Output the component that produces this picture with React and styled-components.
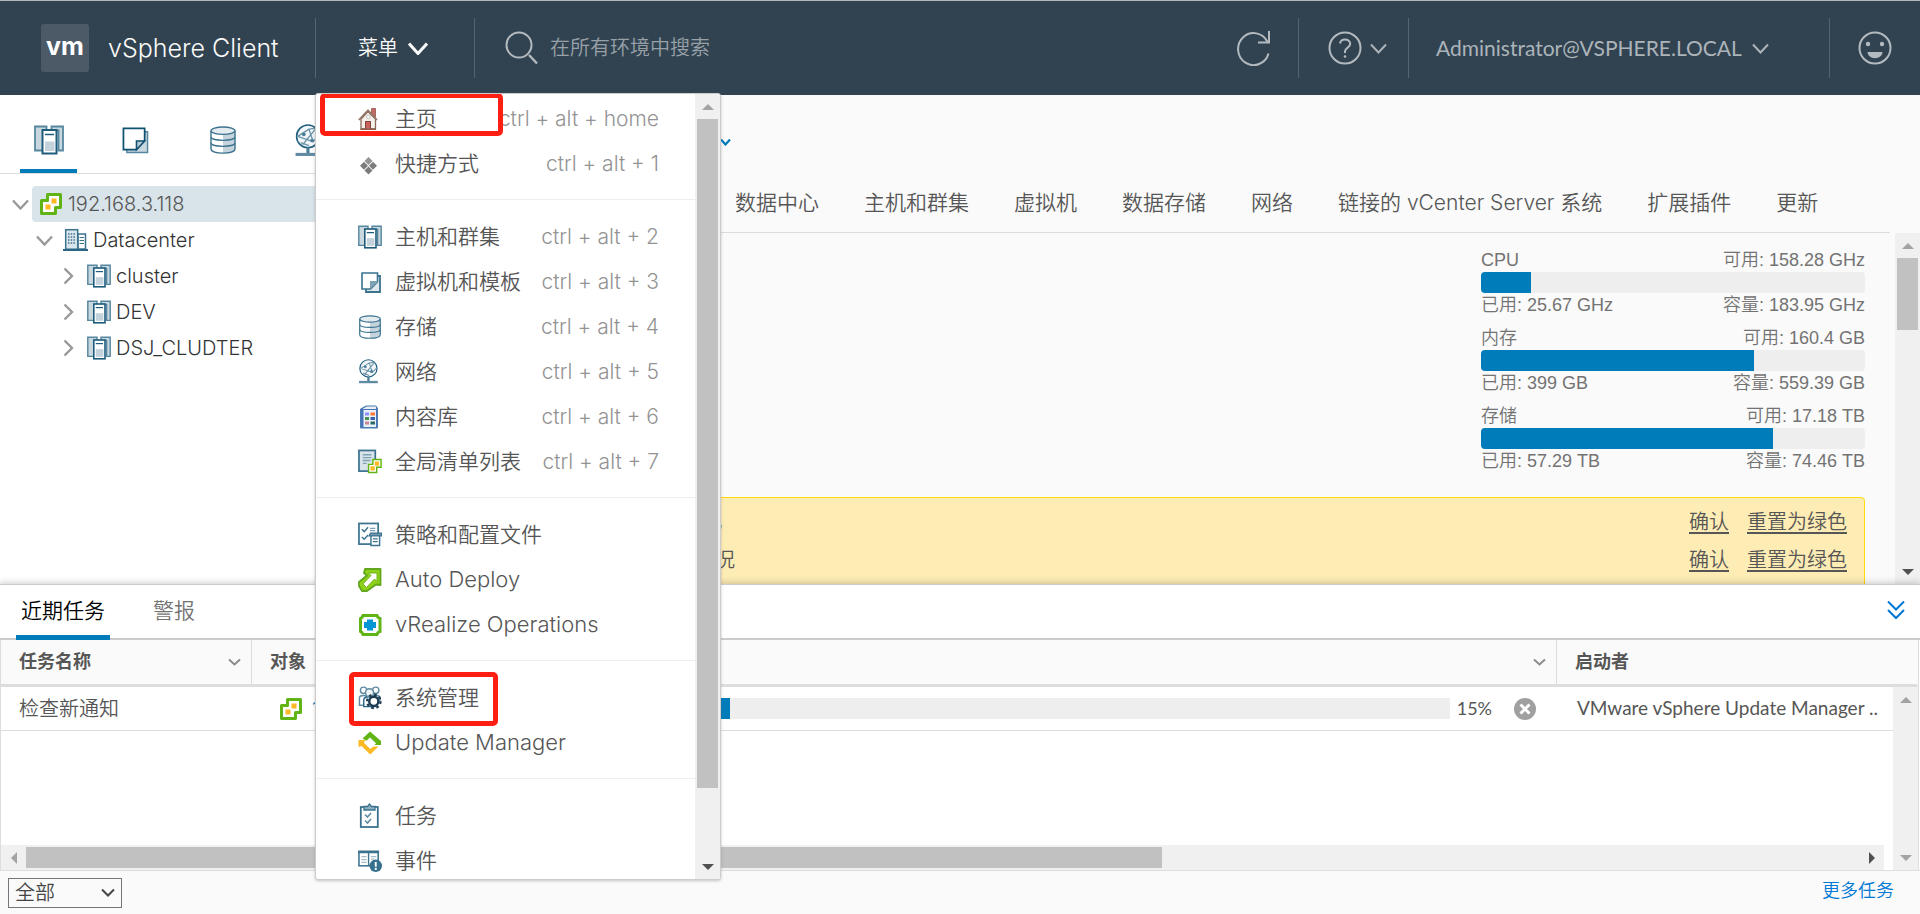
import React, { useState } from "react";
import styled, { createGlobalStyle, css } from "styled-components";

const GlobalStyle = createGlobalStyle`
  * {
    box-sizing: border-box;
  }

  body {
    margin: 0;
    background-color: #fafafa;
    color: #565656;
    font-family: "Inter", "Noto Sans CJK SC", sans-serif;
    font-size: 20px;
    font-weight: 350;
    line-height: 1.2;
    overflow: hidden;
  }

  button, input, select {
    font: inherit;
    color: inherit;
  }

  ul {
    margin: 0;
    padding: 0;
    list-style: none;
  }

  svg {
    display: block;
    flex: none;
  }
`;

const Page = styled.div`
  display: flex;
  flex-direction: column;
  height: 100vh;
`;

const IconButton = styled.button`
  display: flex;
  align-items: center;
  gap: 8px;
  padding: 0;
  border: none;
  background: none;
  cursor: pointer;
`;

/* ---------- header ---------- */

const Header = styled.header`
  position: relative;
  display: flex;
  align-items: center;
  flex: none;
  height: 95px;
  border-top: 1px solid #b5b8ba;
  background-color: #314351;
  color: #acb4ba;
`;

const Brand = styled.div`
  display: flex;
  align-items: center;
  gap: 19px;
  width: 315px;
  padding-left: 41px;
  color: #fafafa;
  font-size: 25px;
  white-space: nowrap;
`;

const Logo = styled.span`
  width: 48px;
  height: 48px;
  border-radius: 3px;
  background-color: #4c5a67;
  color: #fff;
  font-size: 25px;
  font-weight: 700;
  line-height: 44px;
  text-align: center;
`;

const HeaderDivider = styled.span`
  flex: none;
  width: 1px;
  height: 60px;
  background-color: #56646f;
`;

const MenuButton = styled(IconButton)`
  gap: 10px;
  width: 158px;
  padding-left: 42px;
  color: #fafafa;
`;

const Search = styled.label`
  display: flex;
  flex: 1;
  align-items: center;
  gap: 12px;
  padding-left: 30px;
`;

const SearchInput = styled.input`
  flex: 1;
  border: none;
  outline: none;
  padding: 0;
  background: none;

  &::placeholder {
    color: #98a1a8;
  }
`;

const RefreshButton = styled(IconButton)`
  padding-right: 27px;
`;

const HelpButton = styled(IconButton)`
  padding: 0 21px 0 29px;
`;

const UserButton = styled(IconButton)`
  gap: 10px;
  width: 420px;
  padding-left: 27px;
  font-family: "Lato", sans-serif;
  font-size: 21px;
  font-weight: 400;
`;

const FeedbackButton = styled(IconButton)`
  width: 90px;
  justify-content: center;
`;

/* ---------- dropdown ---------- */

const Dropdown = styled.nav`
  position: absolute;
  z-index: 10;
  top: 92px;
  left: 315px;
  display: flex;
  width: 406px;
  height: calc(100vh - 127px);
  border: 1px solid #ccc;
  border-radius: 3px;
  background-color: #fff;
  box-shadow: 0 1px 3px rgba(116, 116, 116, 0.4);
  color: #565656;
  font-size: 21px;
  overflow: hidden;
`;

const DropdownScroll = styled.div`
  flex: 1;
  padding-top: 2px;
  overflow: hidden;
`;

const DropdownGroup = styled.ul`
  & + & {
    margin-top: 13px;
    padding-top: 14px;
    border-top: 1px solid #eee;
  }
`;

const DropdownItem = styled.li`
  position: relative;
`;

const DropdownLink = styled.a`
  display: flex;
  align-items: center;
  gap: 13px;
  height: 45px;
  padding: 0 36px 0 42px;
  color: inherit;
  font-size: ${({ $latin }) => ($latin ? "22px" : "21px")};
  text-decoration: none;
  white-space: nowrap;
`;

const Shortcut = styled.kbd`
  margin-left: auto;
  color: #939393;
  font-family: "Inter", sans-serif;
  font-size: 21px;
  font-weight: 300;
`;

const Marker = styled.span`
  position: absolute;
  top: -3px;
  border: 5px solid #ff1e12;
  border-radius: 5px;
  pointer-events: none;
  ${({ $wide }) =>
    $wide
      ? css`
          left: 4px;
          width: 183px;
          height: 43px;
        `
      : css`
          left: 33px;
          width: 149px;
          height: 54px;
        `}
`;

/* ---------- scroll bars ---------- */

const Track = styled.div`
  display: flex;
  flex: none;
  align-items: center;
  background-color: #f0f0f0;
  ${({ $horizontal }) =>
    $horizontal
      ? css`
          height: 25px;
        `
      : css`
          flex-direction: column;
          width: 25px;
        `}
`;

const TrackArrow = styled.span`
  display: flex;
  flex: none;
  align-items: center;
  justify-content: center;
  width: 25px;
  height: 25px;
  color: ${({ $active }) => ($active ? "#505050" : "#a3a3a3")};
`;

const TrackBody = styled.div`
  flex: 1;
  min-width: 0;
  min-height: 0;
`;

const Thumb = styled.div`
  width: ${({ $horizontal, $size }) => ($horizontal ? $size : "21px")};
  height: ${({ $horizontal, $size }) => ($horizontal ? "21px" : $size)};
  background-color: #c1c1c1;
`;

/* ---------- main ---------- */

const Main = styled.main`
  display: flex;
  flex: 1;
  min-height: 0;
`;

const Sidebar = styled.aside`
  flex: none;
  width: 340px;
  background-color: #fff;
`;

const ViewTabs = styled.div`
  display: flex;
  gap: 30px;
  height: 79px;
  padding-left: 20px;
  border-bottom: 1px solid #ddd;
`;

const ViewTab = styled.button`
  display: flex;
  align-items: center;
  justify-content: center;
  flex: none;
  width: 57px;
  padding: 16px 0 0;
  border: none;
  border-bottom: 4px solid ${({ $active }) => ($active ? "#007cbb" : "transparent")};
  background: none;
`;

const Tree = styled.ul`
  padding-top: 12px;
`;

const TreeRow = styled.li`
  display: flex;
  align-items: center;
  height: 36px;
  padding-left: ${({ $level }) => 8 + $level * 24}px;
`;

const TreeToggle = styled.button`
  display: flex;
  align-items: center;
  justify-content: center;
  flex: none;
  width: 24px;
  height: 36px;
  padding: 0;
  border: none;
  background: none;
  color: #999;
`;

const TreeLabel = styled.a`
  display: flex;
  flex: 1;
  align-items: center;
  gap: 5px;
  height: 36px;
  padding-left: 7px;
  border-radius: 4px;
  background-color: ${({ $selected }) => ($selected ? "#d9e4ea" : "transparent")};
  color: ${({ $selected }) => ($selected ? "#565656" : "#333")};
  text-decoration: none;
`;

const Content = styled.section`
  display: flex;
  flex: 1;
  flex-direction: column;
  min-width: 0;
`;

const ContentHead = styled.div`
  display: flex;
  align-items: center;
  flex: none;
  height: 78px;
  padding: 16px 0 0 380px;
  color: #007cbb;
`;

const ContentTabs = styled.nav`
  display: flex;
  flex: none;
  align-items: center;
  gap: 45px;
  height: 60px;
  margin-right: 30px;
  padding-left: 395px;
  border-bottom: 1px solid #ddd;
`;

const ContentTab = styled.a`
  color: #565656;
  font-size: 21px;
  text-decoration: none;
  white-space: nowrap;
`;

const ContentBody = styled.div`
  display: flex;
  flex: 1;
  min-height: 0;
`;

const Summary = styled.div`
  flex: 1;
  padding: 15px 30px 0 30px;
  overflow: hidden;
`;

const Meters = styled.div`
  display: flex;
  flex-direction: column;
  gap: 9px;
  width: 384px;
  margin: 0 0 24px auto;
  color: #737373;
  font-family: "Liberation Sans", "Noto Sans CJK SC", sans-serif;
  font-size: 18px;
  line-height: 24px;
`;

const MeterLine = styled.div`
  display: flex;
  justify-content: space-between;
`;

const MeterBar = styled.div`
  height: 21px;
  border-radius: 4px;
  background-color: #eee;
  overflow: hidden;
`;

const MeterFill = styled.div`
  height: 100%;
  background-color: #007cbb;
`;

const Alarms = styled.ul`
  height: 300px;
  padding: 5px 17px;
  border: 1px solid #ffdc0b;
  border-radius: 4px;
  background-color: #feecb5;
`;

const Alarm = styled.li`
  display: flex;
  align-items: center;
  gap: 18px;
  height: 38px;
`;

const AlarmText = styled.span`
  width: 347px;
  margin-right: auto;
  text-align: right;
`;

const AlarmLink = styled.a`
  color: #565656;
  text-underline-offset: 3px;
`;

/* ---------- tasks ---------- */

const Panel = styled.section`
  position: relative;
  display: flex;
  flex: none;
  flex-direction: column;
  height: 330px;
  border-top: 1px solid #ccc;
  background-color: #fff;
  box-shadow: 0 -1px 6px 1px rgba(0, 0, 0, 0.16);
`;

const PanelTabs = styled.div`
  display: flex;
  align-items: flex-start;
  height: 55px;
  padding: 0 15px 0 16px;
  border-bottom: 2px solid #ccc;
`;

const PanelTab = styled.button`
  height: 55px;
  margin-right: 38px;
  padding: 2px 5px 0;
  border: none;
  border-bottom: 5px solid ${({ $active }) => ($active ? "#007cbb" : "transparent")};
  background: none;
  color: ${({ $active }) => ($active ? "#000" : "#737373")};
  font-size: 21px;
`;

const CollapseButton = styled(IconButton)`
  height: 50px;
  margin-left: auto;
  color: #0079d4;
`;

const Grid = styled.div`
  position: relative;
  display: flex;
  flex: 1;
  flex-direction: column;
  min-height: 0;
  margin-right: 1px;
  border: 1px solid #ddd;
  border-width: 0 1px;
`;

const TaskTable = styled.table`
  width: 100%;
  border-collapse: separate;
  border-spacing: 0;
  table-layout: fixed;
`;

const HeadCell = styled.th`
  height: 47px;
  padding: 0 10px 0 18px;
  border-right: 1px solid ${({ $last }) => ($last ? "transparent" : "#ddd")};
  border-bottom: 3px solid #ddd;
  background-color: #fafafa;
  font-size: 18px;
  font-weight: 700;
  text-align: left;

  svg {
    margin-left: auto;
    color: #8c8c8c;
  }
`;

const HeadInner = styled.div`
  display: flex;
  align-items: center;
`;

const Cell = styled.td`
  height: 44px;
  padding: 0 10px 0 18px;
  border-bottom: 1px solid #ddd;
  white-space: nowrap;
`;

const InitiatorCell = styled(Cell)`
  padding-left: 20px;
  font-family: "Lato", sans-serif;
  font-size: 19px;
  font-weight: 400;
`;

const TaskTarget = styled.a`
  display: flex;
  align-items: center;
  gap: 9px;
  padding-left: 9px;
  color: #007cbb;
  text-decoration: none;
`;

const Progress = styled.div`
  display: flex;
  align-items: center;
  gap: 7px;
  font-family: "Lato", sans-serif;
  font-size: 18px;
  font-weight: 400;
`;

const ProgressTrack = styled.div`
  flex: 1;
  height: 21px;
  background-color: #eee;
`;

const CancelButton = styled(IconButton)`
  margin: 0 11px 0 15px;
`;

const GridScroll = styled(Track)`
  position: absolute;
  top: 47px;
  right: 0;
  bottom: 0;
`;

const GridScrollX = styled(Track)`
  margin: auto 34px 0 0;
`;

const PanelFoot = styled.footer`
  display: flex;
  flex: none;
  align-items: center;
  justify-content: space-between;
  height: 44px;
  padding: 0 26px 4px 8px;
  border-top: 1px solid #ddd;
  background-color: #fafafa;
`;

const FilterBox = styled.span`
  position: relative;
  display: flex;
  align-items: center;
  margin-top: 4px;
  color: #454545;
`;

const Filter = styled.select`
  width: 114px;
  height: 30px;
  padding: 0 6px;
  border: 1px solid #767676;
  border-radius: 0;
  background: none;
  appearance: none;
`;

const FilterArrow = styled.span`
  position: absolute;
  right: 7px;
  pointer-events: none;
`;

const MoreLink = styled.a`
  color: #0079d4;
  font-size: 18px;
  text-decoration: none;
`;

/* ---------- icons ---------- */

const Chevron = ({ width = 16, height = 10, stroke = 2 }) => (
  <svg width={width} height={height} viewBox={`0 0 ${width} ${height}`} fill="none">
    <path
      d={`M1 1.5 L${width / 2} ${height - 1.5} L${width - 1} 1.5`}
      stroke="currentColor"
      strokeWidth={stroke}
    />
  </svg>
);

const ChevronRight = () => (
  <svg width="11" height="18" viewBox="0 0 11 18" fill="none">
    <path d="M1.5 1.5 L9 9 L1.5 16.5" stroke="currentColor" strokeWidth="2.4" />
  </svg>
);

const Triangle = ({ direction }) => {
  const points = {
    up: "0,9 12,9 6,3",
    down: "0,3 12,3 6,9",
    left: "9,0 9,12 3,6",
    right: "3,0 3,12 9,6",
  };
  return (
    <svg width="12" height="12" viewBox="0 0 12 12">
      <polygon points={points[direction]} fill="currentColor" />
    </svg>
  );
};

const SearchIcon = () => (
  <svg width="33" height="34" viewBox="0 0 33 34" fill="none" stroke="#b4bbc0" strokeWidth="2">
    <circle cx="14" cy="14" r="12.5" />
    <path d="M24 24 L32 32.5" strokeWidth="2.4" />
  </svg>
);

const RefreshIcon = () => (
  <svg width="34" height="36" viewBox="0 0 34 36" fill="none" stroke="#b4bbc0" strokeWidth="2">
    <path d="M31.5 23.5 A15.5 16 0 1 1 30.5 12" />
    <path d="M32 1 V12.5 H21" />
  </svg>
);

const HelpIcon = () => (
  <svg width="34" height="34" viewBox="0 0 34 34" fill="none" stroke="#b4bbc0" strokeWidth="2">
    <circle cx="17" cy="17" r="15.5" />
    <path d="M12 12.5 C12.5 9.5 14.5 8.5 17 8.5 C20 8.5 22.2 10.3 22.2 13 C22.2 16.5 17 16.7 17 20.5 V22" />
    <circle cx="17" cy="25.5" r="1.3" fill="#b4bbc0" stroke="none" />
  </svg>
);

const SmileIcon = () => (
  <svg width="34" height="34" viewBox="0 0 34 34" fill="none">
    <circle cx="17" cy="17" r="15.5" stroke="#b4bbc0" strokeWidth="2" />
    <circle cx="10" cy="13" r="2.2" fill="#b4bbc0" />
    <circle cx="24" cy="13" r="2.2" fill="#b4bbc0" />
    <path d="M9.5 21 H24.5 C24 25 21 27.2 17 27.2 C13 27.2 10 25 9.5 21 Z" fill="#b4bbc0" />
  </svg>
);

const HostsIcon = ({ size = 24 }) => (
  <svg width={size} height={size} viewBox="0 0 30 29">
    <path d="M1 1 H12.5 V5 H9 V25 H1 Z" fill="#c9d7df" stroke="#5687a0" strokeWidth="1.8" />
    <path d="M17.5 1 H29 V25 H24.5 V5 H17.5 Z" fill="#c9d7df" stroke="#5687a0" strokeWidth="1.8" />
    <rect x="8.5" y="4.5" width="14" height="23.5" fill="#fff" stroke="#1f5c7c" strokeWidth="2" />
    <path d="M11 9 H20" stroke="#1f5c7c" strokeWidth="1.5" />
    <rect x="11" y="16" width="9.5" height="9.5" fill="#c3d2db" />
  </svg>
);

const TemplatesIcon = ({ size = 24 }) => (
  <svg width={size} height={size} viewBox="0 0 28 28">
    <path d="M6 5 H26.5 V26.5 H5 V23" fill="#c9d7df" stroke="#5687a0" strokeWidth="1.5" />
    <path d="M1.5 1.5 H23.5 V14 L15 23.5 H1.5 Z" fill="#fff" stroke="#0f4f70" strokeWidth="1.8" />
    <path d="M15 23.5 V14.5 H23.5 Z" fill="#b8cad4" stroke="#0f4f70" strokeWidth="1.6" />
  </svg>
);

const VmIcon = () => (
  <svg width="24" height="24" viewBox="0 0 24 24">
    <path d="M8 6 H22 V22 H8 Z" fill="#dfe8ed" stroke="#3b738f" strokeWidth="1.8" />
    <path d="M4 3 H19.5 V12 L12.5 19 H4 Z" fill="#fff" stroke="#3b738f" strokeWidth="1.6" />
    <path d="M12 19 V11 H19.5 V12.5 Z" fill="#7fa1b4" />
  </svg>
);

const StorageIcon = ({ size = 24 }) => (
  <svg width={size} height={size} viewBox="0 0 28 28">
    <path d="M2 5 V23 C2 26 8 27.3 14 27.3 V9 Z" fill="#fff" />
    <path d="M14 9 V27.3 C20 27.3 26 26 26 23 V5 Z" fill="#c5d3dc" />
    <ellipse cx="14" cy="4.7" rx="12" ry="3.7" fill="#e3ebef" />
    <g fill="none" stroke="#3b738f" strokeWidth="1.4">
      <ellipse cx="14" cy="4.7" rx="12" ry="3.7" />
      <path d="M2 5 V23 C2 28.5 26 28.5 26 23 V5" />
      <path d="M2 11 C2 15.5 26 15.5 26 11" />
      <path d="M2 17 C2 21.5 26 21.5 26 17" />
    </g>
  </svg>
);

const NetworkIcon = ({ size = 24 }) => (
  <svg width={size} height={size + 1} viewBox="0 0 30 32">
    <circle cx="13" cy="12" r="11" fill="#f2f6f8" stroke="#215f7e" strokeWidth="1.5" />
    <path
      d="M3 12 L14 5 L21 4 M14 5 L18 17 L23 12 M3 12 L18 17 M8 20 L21 4 M6 18 L14 21"
      fill="none"
      stroke="#6b94a9"
      strokeWidth="1.3"
    />
    <circle cx="9" cy="10" r="1.8" fill="#4a7f99" />
    <circle cx="17" cy="16" r="1.8" fill="#4a7f99" />
    <path d="M13 23 V29" stroke="#4a7f99" strokeWidth="3" />
    <path d="M1 29.5 H25" stroke="#5f8ba3" strokeWidth="3" />
  </svg>
);

const DatacenterIcon = () => (
  <svg width="25" height="24" viewBox="0 0 25 24">
    <rect x="15" y="6" width="7.5" height="15" fill="#fff" stroke="#3b738f" strokeWidth="1.5" />
    <rect x="2.7" y="1.7" width="12" height="19.5" fill="#dbe6ec" stroke="#3b738f" strokeWidth="1.5" />
    <path d="M5 6 H13 M5 9 H13 M5 12 H13 M5 15 H13" stroke="#3b738f" strokeWidth="1.3" strokeDasharray="1.5 1.2" />
    <path d="M16.5 9.5 H21 M16.5 12.5 H21 M16.5 15.5 H21" stroke="#3b738f" strokeWidth="1.2" />
    <path d="M0 22 H25" stroke="#2a6785" strokeWidth="2" />
  </svg>
);

const VCenterIcon = () => (
  <svg width="24" height="24" viewBox="0 0 24 24">
    <path
      d="M8.5 2.5 H21.5 V15.5 H16.5 V21.5 H2.5 V8.5 H8.5 Z"
      fill="#fff"
      stroke="#60b515"
      strokeWidth="3"
      strokeLinejoin="round"
    />
    <rect x="12.5" y="6.5" width="5" height="5" fill="#fdb924" />
    <rect x="6.5" y="12.5" width="5" height="5" fill="#fdb924" />
  </svg>
);

const HomeIcon = () => (
  <svg width="24" height="24" viewBox="0 0 24 24">
    <path d="M13.5 1.5 H17.5 V10 L13.5 7 Z" fill="#c26b64" stroke="#a5665f" />
    <path d="M3 12 L10 4.5 L17.5 12 V22 H3 Z" fill="#f5f1ea" stroke="#8b6a5a" strokeWidth="1.3" />
    <path d="M0.8 13 L10 3.2 L19 13" fill="none" stroke="#94786b" strokeWidth="1.8" />
    <circle cx="10.3" cy="10" r="1.8" fill="#fff" stroke="#c3c1be" />
    <rect x="7.5" y="14.5" width="5" height="8" fill="#c9625c" stroke="#85433d" />
    <path d="M2.5 22.3 H18" stroke="#8b5e4c" strokeWidth="1.5" />
  </svg>
);

const ShortcutsIcon = () => (
  <svg width="24" height="24" viewBox="0 0 24 24">
    <g fill="#7c7c7c">
      <path d="M10.5 5 L14.5 9 L10.5 13 L6.5 9 Z" fill="#949494" />
      <path d="M6 9.7 L10 13.7 L6 17.7 L2 13.7 Z" />
      <path d="M15 9.7 L19 13.7 L15 17.7 L11 13.7 Z" />
      <path d="M10.5 14.4 L14.5 18.4 L10.5 22.4 L6.5 18.4 Z" />
    </g>
  </svg>
);

const LibraryIcon = () => (
  <svg width="24" height="24" viewBox="0 0 24 24">
    <path d="M2.5 4 L8 1 H18 L19.5 3.5 V23 H2.5 Z" fill="#4a74b8" stroke="#4d7fb2" />
    <path d="M5 3.5 L9 1.5 H18 V4 H5 Z" fill="#e8eef2" />
    <rect x="5.5" y="5" width="12.5" height="17" fill="#e9f1f8" />
    <rect x="7" y="7.5" width="4" height="3" fill="#8b91ff" />
    <rect x="12.5" y="7.5" width="4.5" height="3" fill="#ff7733" />
    <rect x="7" y="12" width="4" height="3" fill="#4e8f52" />
    <rect x="12.5" y="12" width="4.5" height="3" fill="#3b63a8" />
    <rect x="7" y="16.5" width="4" height="3" fill="#c98794" />
    <rect x="12.5" y="16.5" width="4.5" height="3" fill="#2c6668" />
  </svg>
);

const InventoryIcon = () => (
  <svg width="24" height="25" viewBox="0 0 25 25">
    <rect x="1" y="1" width="17" height="21.5" fill="#d9e4ea" stroke="#3b738f" strokeWidth="1.8" />
    <path d="M5 5.5 H14 M5 8.5 H14 M5 11.5 H13 M5 14.5 H9" stroke="#7fa1b4" strokeWidth="1.4" />
    <path d="M15.5 10.5 H24 V18.5 H19.5 V24 H11 V15.5 H15.5 Z" fill="#fff" stroke="#60b515" strokeWidth="1.5" />
    <path d="M17.5 12.5 H22 V17 H17.5 Z M13 17.5 H17.5 V22 H13 Z" fill="#fdb924" />
  </svg>
);

const PolicyIcon = () => (
  <svg width="24" height="25" viewBox="0 0 25 25" fill="none" stroke="#3b738f">
    <rect x="1" y="1" width="20" height="21.5" fill="#fff" strokeWidth="1.8" />
    <path d="M4 7 L6.5 9.5 L10.5 5 M4 15 L6.5 17.5 L10.5 13" strokeWidth="1.5" />
    <path d="M12.5 6 H18 M12.5 8.5 H18" stroke="#7fa1b4" strokeWidth="1.3" />
    <path d="M13.5 14 V24 H22.5 V14" fill="#fff" strokeWidth="1.5" />
    <path d="M13 11 H24.5 V14 H11.5 Z" fill="#6f99ae" strokeWidth="1.2" />
    <path d="M15.5 17 H20.5 M15.5 20 H20.5" strokeWidth="1.3" />
  </svg>
);

const DeployIcon = () => (
  <svg width="24" height="24" viewBox="0 0 24 24">
    <path
      d="M7 1 H22.5 V17 L18 16.5 L9 23 H4 L1 18 V14 L9 7.5 L6 5 Z"
      fill="#8fd119"
      stroke="#62a81e"
      strokeWidth="1.8"
      strokeLinejoin="round"
    />
    <path d="M10.5 5 H19 V13.5 L16.5 11 L8.5 19.5 L4.8 16 L13 7.5 Z" fill="#fff" stroke="#6fb51a" />
  </svg>
);

const OperationsIcon = () => (
  <svg width="24" height="24" viewBox="0 0 24 24">
    <path
      d="M5 2.5 H19 L20 4.5 L22 5.5 V18.5 L20 19.5 L19 21.5 H5 L4 19.5 L2.5 18.5 V5.5 L4 4.5 Z"
      fill="#fff"
      stroke="#60b515"
      strokeWidth="3"
    />
    <path d="M9 6.5 H15 V9 H18 V15 H15 V17.5 H9 V15 H6 V9 H9 Z" fill="#0095d3" />
  </svg>
);

const AdminIcon = () => (
  <svg width="24" height="25" viewBox="0 0 25 25">
    <g fill="#fff" stroke="#5f8ba3" strokeWidth="1.5">
      <path d="M1.5 20.5 V13 C1.5 9.5 9.5 9.5 10 13 V20.5 Z" />
      <circle cx="5.8" cy="5" r="3.3" />
      <circle cx="18.5" cy="5" r="3.3" />
      <path d="M15 13 C15 9.5 23 9.5 23 13 V16" />
      <path d="M6 22 V15 C6 10.5 17.5 10.5 17.5 15 V22 Z" stroke="#2a6785" />
      <circle cx="12" cy="7.5" r="4.2" fill="#eef3f5" />
    </g>
    <circle cx="16.5" cy="16.5" r="4.8" fill="#fff" stroke="#1d3c52" strokeWidth="2.6" />
    <circle cx="16.5" cy="16.5" r="7" fill="none" stroke="#1d3c52" strokeWidth="2.4" strokeDasharray="2.75 2.75" />
  </svg>
);

const UpdateIcon = () => (
  <svg width="24" height="24" viewBox="0 0 24 24">
    <path d="M4.5 7.5 L12 0.5 L23 10 V14 H16.5 L18 12.2 L12 6.5 L8.5 9.8 Z" fill="#60b515" />
    <path d="M0.5 9 H7.5 L5.8 11.5 L12.2 18 L15.5 15.5 L20.5 15.5 L12.2 23.5 L3.5 15 L0.5 16 Z" fill="#fdb924" />
  </svg>
);

const TasksIcon = () => (
  <svg width="24" height="25" viewBox="0 0 24 25" fill="none" stroke="#3b738f">
    <rect x="2.8" y="4" width="17" height="20" fill="#fff" strokeWidth="1.8" />
    <path d="M6 3.5 H9.5 L11.5 1 L13.5 3.5 H17 V7 H6 Z" fill="#8fb0c0" strokeWidth="1.3" />
    <path d="M7 11.5 L9.5 14 L13 10 M7 17.5 L9.5 20 L13 16" stroke="#5f8ba3" strokeWidth="1.6" />
  </svg>
);

const EventsIcon = () => (
  <svg width="24" height="24" viewBox="0 0 25 24">
    <rect x="1" y="2.5" width="20" height="14.5" fill="#fff" stroke="#3b738f" strokeWidth="1.6" />
    <path d="M0.2 2.5 H22" stroke="#3b738f" strokeWidth="3" />
    <path d="M11 3 V17" stroke="#3b738f" strokeWidth="1.4" />
    <path d="M3.5 7.5 H9 M3.5 10.5 H9 M3.5 13.5 H9 M13.5 7.5 H19 M13.5 10 H17" stroke="#a5bdca" strokeWidth="1.2" />
    <circle cx="18.5" cy="17" r="6.5" fill="#36708d" />
    <path d="M18.5 13 V18" stroke="#fff" strokeWidth="2" />
    <circle cx="18.5" cy="20.3" r="1.2" fill="#fff" />
  </svg>
);

const CancelIcon = () => (
  <svg width="22" height="22" viewBox="0 0 22 22">
    <circle cx="11" cy="11" r="11" fill="#a0a0a0" />
    <path d="M6.5 6.5 L15.5 15.5 M15.5 6.5 L6.5 15.5" stroke="#fff" strokeWidth="3" />
  </svg>
);

const CollapseIcon = () => (
  <svg width="18" height="20" viewBox="0 0 18 20" fill="none" stroke="currentColor" strokeWidth="2">
    <path d="M1 1.5 L9 9.5 L17 1.5 M1 10 L9 18 L17 10" />
  </svg>
);

/* ---------- data ---------- */

const menuGroups = [
  [
    { label: "主页", icon: HomeIcon, keys: "ctrl + alt + home", marker: "wide" },
    { label: "快捷方式", icon: ShortcutsIcon, keys: "ctrl + alt + 1" },
  ],
  [
    { label: "主机和群集", icon: HostsIcon, keys: "ctrl + alt + 2" },
    { label: "虚拟机和模板", icon: VmIcon, keys: "ctrl + alt + 3" },
    { label: "存储", icon: StorageIcon, keys: "ctrl + alt + 4" },
    { label: "网络", icon: NetworkIcon, keys: "ctrl + alt + 5" },
    { label: "内容库", icon: LibraryIcon, keys: "ctrl + alt + 6" },
    { label: "全局清单列表", icon: InventoryIcon, keys: "ctrl + alt + 7" },
  ],
  [
    { label: "策略和配置文件", icon: PolicyIcon },
    { label: "Auto Deploy", icon: DeployIcon, latin: true },
    { label: "vRealize Operations", icon: OperationsIcon, latin: true },
  ],
  [
    { label: "系统管理", icon: AdminIcon, marker: "narrow" },
    { label: "Update Manager", icon: UpdateIcon, latin: true },
  ],
  [
    { label: "任务", icon: TasksIcon },
    { label: "事件", icon: EventsIcon },
  ],
];

const views = [
  { label: "主机和群集", icon: HostsIcon, size: 30 },
  { label: "虚拟机和模板", icon: TemplatesIcon, size: 27 },
  { label: "存储", icon: StorageIcon, size: 28 },
  { label: "网络", icon: NetworkIcon, size: 32 },
];

const treeNodes = [
  { label: "192.168.3.118", level: 0, icon: VCenterIcon, open: true },
  { label: "Datacenter", level: 1, icon: DatacenterIcon, open: true },
  { label: "cluster", level: 2, icon: HostsIcon },
  { label: "DEV", level: 2, icon: HostsIcon },
  { label: "DSJ_CLUDTER", level: 2, icon: HostsIcon },
];

const contentTabs = [
  "数据中心",
  "主机和群集",
  "虚拟机",
  "数据存储",
  "网络",
  "链接的 vCenter Server 系统",
  "扩展插件",
  "更新",
];

const meters = [
  { name: "CPU", free: "158.28 GHz", used: "25.67 GHz", total: "183.95 GHz", percent: 13 },
  { name: "内存", free: "160.4 GB", used: "399 GB", total: "559.39 GB", percent: 71 },
  { name: "存储", free: "17.18 TB", used: "57.29 TB", total: "74.46 TB", percent: 76 },
];

const alarms = ["，", "况"];

/* ---------- parts ---------- */

const VerticalScroll = ({ as: Wrapper = Track, size, upActive, downActive }) => (
  <Wrapper>
    <TrackArrow $active={upActive}>
      <Triangle direction="up" />
    </TrackArrow>
    <TrackBody>{size && <Thumb $size={size} />}</TrackBody>
    <TrackArrow $active={downActive}>
      <Triangle direction="down" />
    </TrackArrow>
  </Wrapper>
);

const MainMenu = () => (
  <Dropdown aria-label="菜单">
    <DropdownScroll>
      {menuGroups.map((group) => (
        <DropdownGroup key={group[0].label}>
          {group.map(({ label, icon: Icon, keys, marker, latin }) => (
            <DropdownItem key={label}>
              <DropdownLink href="#" $latin={latin}>
                <Icon />
                {label}
                {keys && <Shortcut>{keys}</Shortcut>}
              </DropdownLink>
              {marker && <Marker $wide={marker === "wide"} />}
            </DropdownItem>
          ))}
        </DropdownGroup>
      ))}
    </DropdownScroll>
    <VerticalScroll size="91%" downActive />
  </Dropdown>
);

const App = () => {
  const [menuOpen, setMenuOpen] = useState(true);
  const [filter, setFilter] = useState("all");

  return (
    <Page>
      <GlobalStyle />
      <Header>
        <Brand>
          <Logo>vm</Logo>
          vSphere Client
        </Brand>
        <HeaderDivider />
        <MenuButton onClick={() => setMenuOpen(!menuOpen)}>
          菜单
          <Chevron width={20} height={13} stroke={3} />
        </MenuButton>
        <HeaderDivider />
        <Search>
          <SearchIcon />
          <SearchInput type="text" placeholder="在所有环境中搜索" aria-label="搜索" />
        </Search>
        <RefreshButton aria-label="刷新">
          <RefreshIcon />
        </RefreshButton>
        <HeaderDivider />
        <HelpButton aria-label="帮助">
          <HelpIcon />
          <Chevron width={17} height={11} />
        </HelpButton>
        <HeaderDivider />
        <UserButton>
          Administrator@VSPHERE.LOCAL
          <Chevron width={17} height={11} />
        </UserButton>
        <HeaderDivider />
        <FeedbackButton aria-label="反馈">
          <SmileIcon />
        </FeedbackButton>
        {menuOpen && <MainMenu />}
      </Header>

      <Main>
        <Sidebar>
          <ViewTabs>
            {views.map(({ label, icon: Icon, size }, index) => (
              <ViewTab key={label} aria-label={label} $active={index === 0}>
                <Icon size={size} />
              </ViewTab>
            ))}
          </ViewTabs>
          <Tree>
            {treeNodes.map(({ label, level, icon: Icon, open }) => (
              <TreeRow key={label} $level={level}>
                <TreeToggle aria-label={label}>
                  {open ? <Chevron width={17} height={11} stroke={2.4} /> : <ChevronRight />}
                </TreeToggle>
                <TreeLabel href="#" $selected={level === 0}>
                  <Icon />
                  {label}
                </TreeLabel>
              </TreeRow>
            ))}
          </Tree>
        </Sidebar>

        <Content>
          <ContentHead>
            <IconButton aria-label="操作">
              <Chevron width={11} height={8} stroke={2.2} />
            </IconButton>
          </ContentHead>
          <ContentTabs>
            {contentTabs.map((tab) => (
              <ContentTab key={tab} href="#">
                {tab}
              </ContentTab>
            ))}
          </ContentTabs>
          <ContentBody>
            <Summary>
              <Meters>
                {meters.map(({ name, free, used, total, percent }) => (
                  <div key={name}>
                    <MeterLine>
                      <span>{name}</span>
                      <span>可用: {free}</span>
                    </MeterLine>
                    <MeterBar>
                      <MeterFill style={{ width: `${percent}%` }} />
                    </MeterBar>
                    <MeterLine>
                      <span>已用: {used}</span>
                      <span>容量: {total}</span>
                    </MeterLine>
                  </div>
                ))}
              </Meters>
              <Alarms>
                {alarms.map((text) => (
                  <Alarm key={text}>
                    <AlarmText>{text}</AlarmText>
                    <AlarmLink href="#">确认</AlarmLink>
                    <AlarmLink href="#">重置为绿色</AlarmLink>
                  </Alarm>
                ))}
              </Alarms>
            </Summary>
            <VerticalScroll size="24%" downActive />
          </ContentBody>
        </Content>
      </Main>

      <Panel>
        <PanelTabs>
          <PanelTab $active>近期任务</PanelTab>
          <PanelTab>警报</PanelTab>
          <CollapseButton aria-label="折叠">
            <CollapseIcon />
          </CollapseButton>
        </PanelTabs>
        <Grid>
          <TaskTable>
            <colgroup>
              <col style={{ width: 251 }} />
              <col style={{ width: 95 }} />
              <col style={{ width: 238 }} />
              <col />
              <col style={{ width: 361 }} />
            </colgroup>
            <thead>
              <tr>
                <HeadCell>
                  <HeadInner>
                    任务名称
                    <Chevron width={13} height={8} />
                  </HeadInner>
                </HeadCell>
                <HeadCell>对象</HeadCell>
                <HeadCell />
                <HeadCell>
                  <HeadInner>
                    <Chevron width={13} height={8} />
                  </HeadInner>
                </HeadCell>
                <HeadCell $last>启动者</HeadCell>
              </tr>
            </thead>
            <tbody>
              <tr>
                <Cell>检查新通知</Cell>
                <Cell>
                  <TaskTarget href="#">
                    <VCenterIcon />1
                  </TaskTarget>
                </Cell>
                <Cell />
                <Cell>
                  <Progress>
                    <ProgressTrack>
                      <MeterFill style={{ width: "15%" }} />
                    </ProgressTrack>
                    15%
                    <CancelButton aria-label="取消">
                      <CancelIcon />
                    </CancelButton>
                  </Progress>
                </Cell>
                <InitiatorCell>VMware vSphere Update Manager ..</InitiatorCell>
              </tr>
            </tbody>
          </TaskTable>
          <GridScrollX $horizontal>
            <TrackArrow>
              <Triangle direction="left" />
            </TrackArrow>
            <TrackBody>
              <Thumb $horizontal $size="62%" />
            </TrackBody>
            <TrackArrow $active>
              <Triangle direction="right" />
            </TrackArrow>
          </GridScrollX>
          <VerticalScroll as={GridScroll} />
        </Grid>
        <PanelFoot>
          <FilterBox>
            <Filter aria-label="筛选" value={filter} onChange={(e) => setFilter(e.target.value)}>
              <option value="all">全部</option>
            </Filter>
            <FilterArrow>
              <Chevron width={14} height={9} />
            </FilterArrow>
          </FilterBox>
          <MoreLink href="#">更多任务</MoreLink>
        </PanelFoot>
      </Panel>
    </Page>
  );
};

export default App;
